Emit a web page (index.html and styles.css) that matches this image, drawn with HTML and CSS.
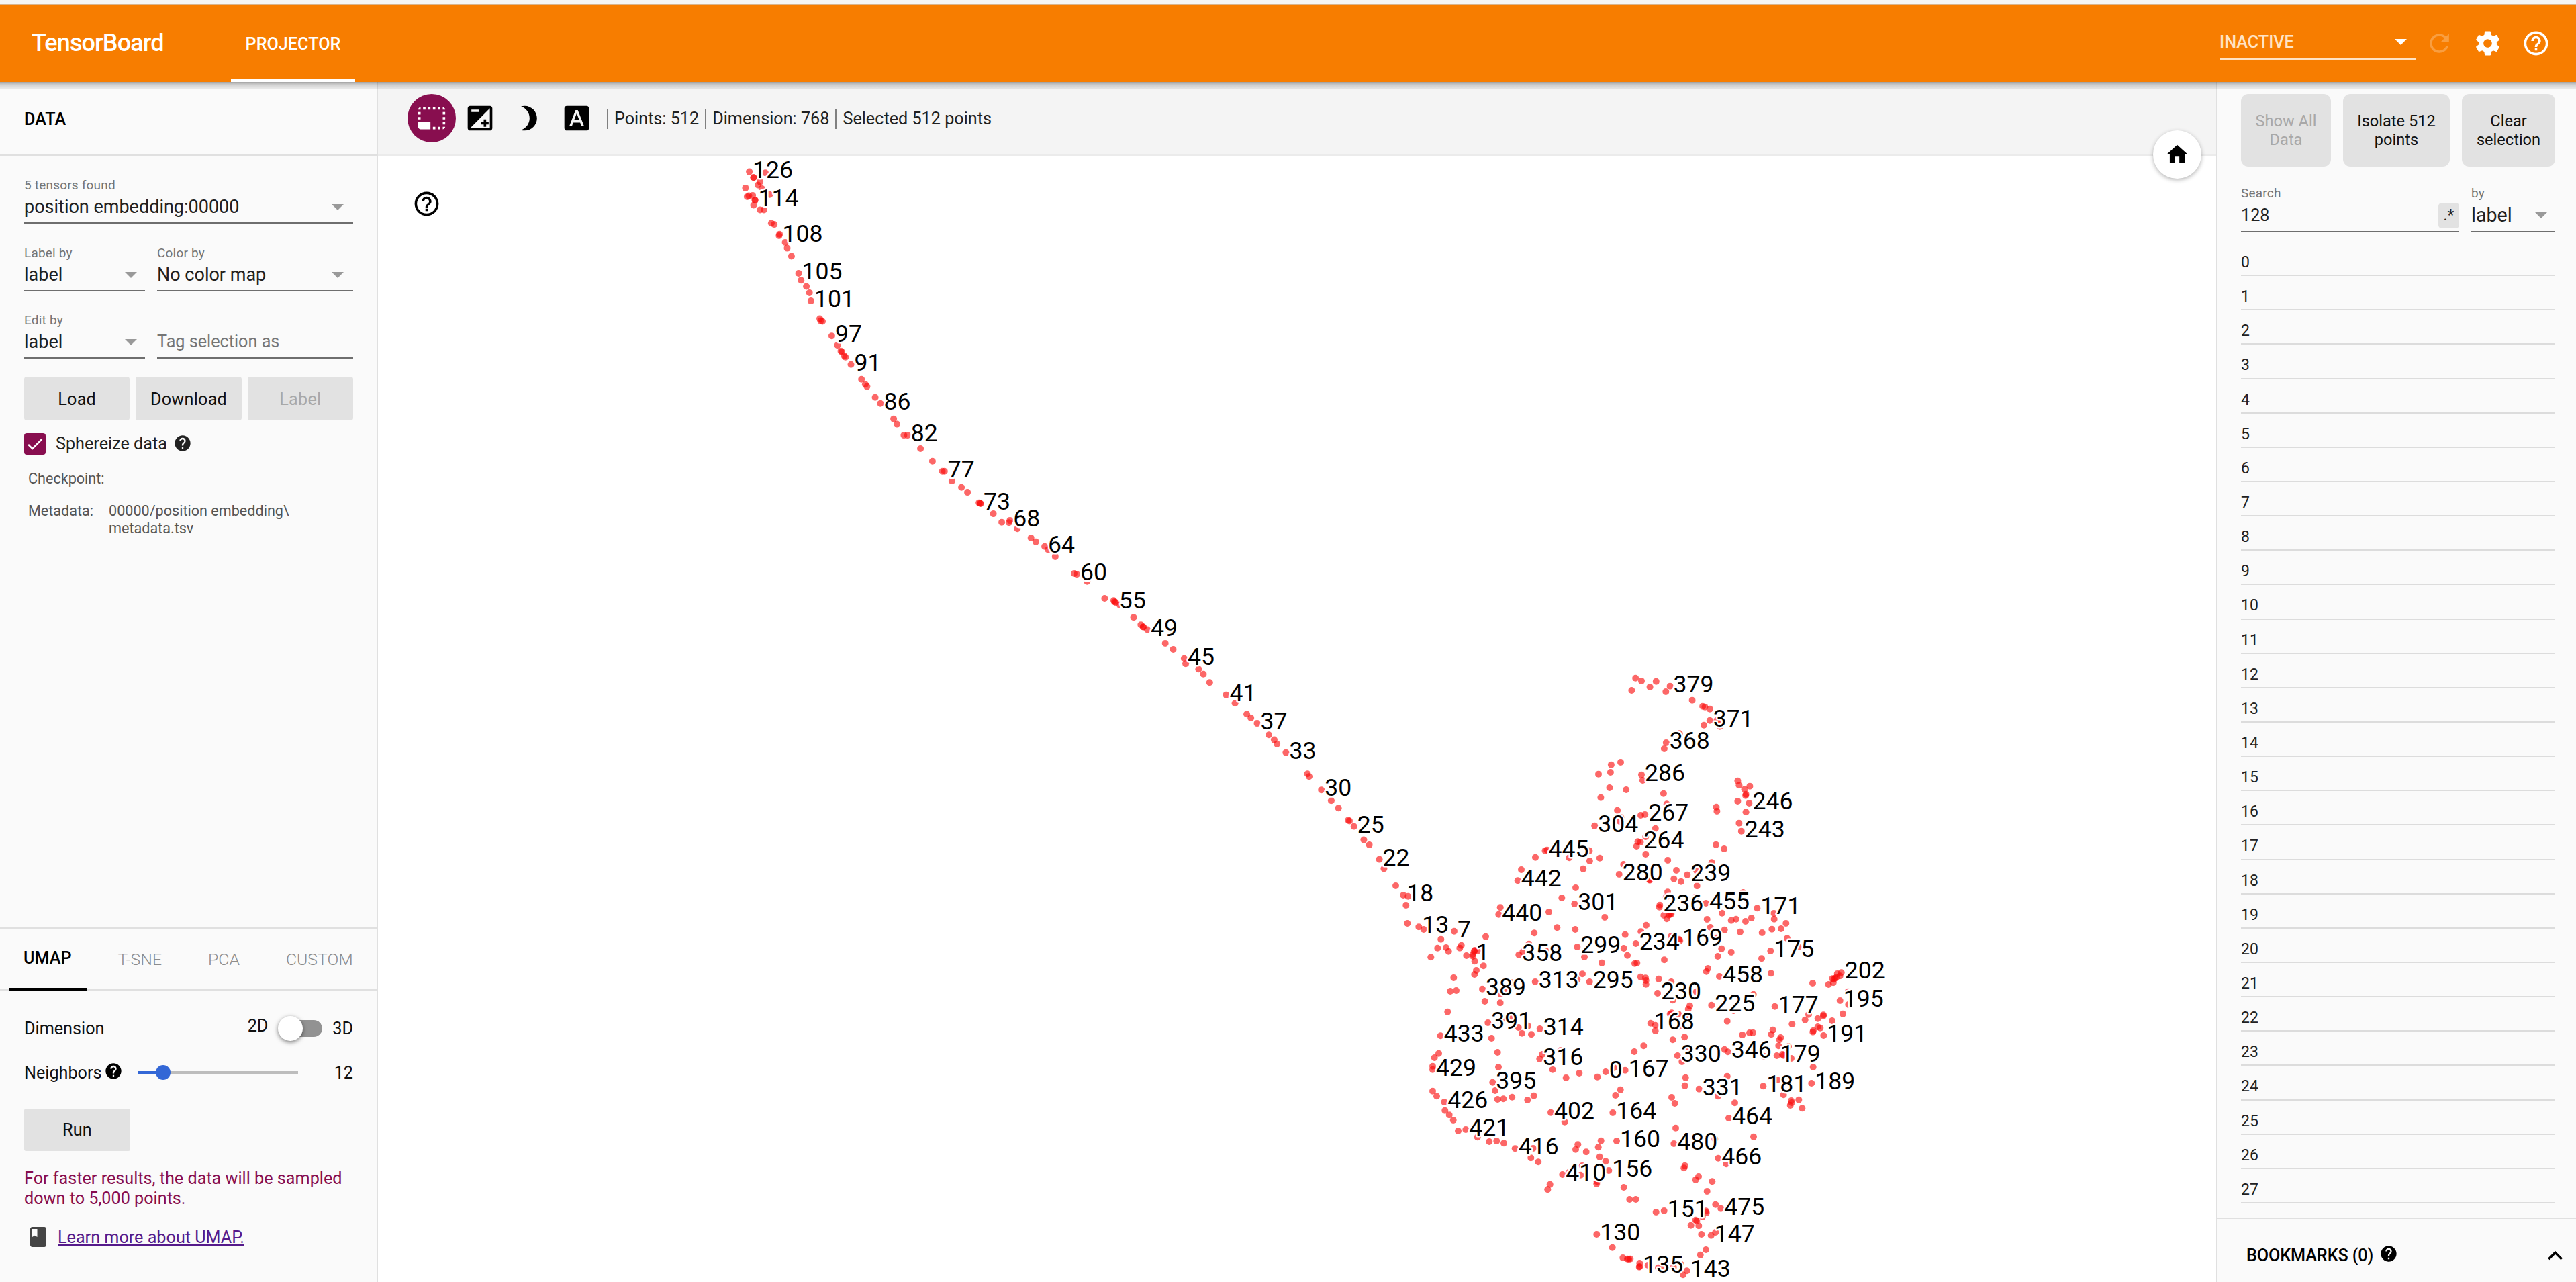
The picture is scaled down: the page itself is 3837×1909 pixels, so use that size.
FILE: index.html
```html
<!DOCTYPE html>
<html lang="en">
<head>
<meta charset="utf-8">
<title>TensorBoard</title>
<link rel="stylesheet" href="styles.css">
</head>
<body>
<svg class="defs" aria-hidden="true">
  <symbol id="i-size" viewBox="0 0 24 24"><path d="M23 15h-2v2h2v-2zm0-4h-2v2h2v-2zm0 8h-2v2c1 0 2-1 2-2zM15 3h-2v2h2V3zm8 4h-2v2h2V7zm-2-4v2h2c0-1-1-2-2-2zM3 21h8v-6H1v4c0 1.1.9 2 2 2zM3 7H1v2h2V7zm12 12h-2v2h2v-2zm4-16h-2v2h2V3zm0 16h-2v2h2v-2zM3 3C2 3 1 4 1 5h2V3zm0 8H1v2h2v-2zm8-8H9v2h2V3zM7 3H5v2h2V3z"/></symbol>
  <symbol id="i-exposure" viewBox="0 0 24 24"><path d="M15 17v2h2v-2h2v-2h-2v-2h-2v2h-2v2h2zm5-15H4c-1.1 0-2 .9-2 2v16c0 1.1.9 2 2 2h16c1.1 0 2-.9 2-2V4c0-1.1-.9-2-2-2zM5 5h6v2H5V5zm15 15H4L20 4v16z"/></symbol>
  <symbol id="i-moon" viewBox="0 0 24 24"><path d="M9 2c-1.05 0-2.05.16-3 .46 4.06 1.27 7 5.06 7 9.54 0 4.48-2.94 8.27-7 9.54.95.3 1.95.46 3 .46 5.52 0 10-4.48 10-10S14.52 2 9 2z"/></symbol>
  <symbol id="i-font" viewBox="0 0 24 24"><path d="M9.93 13.5h4.14L12 7.98zM20 2H4c-1.1 0-2 .9-2 2v16c0 1.1.9 2 2 2h16c1.1 0 2-.9 2-2V4c0-1.1-.9-2-2-2zm-4.05 16.5l-1.14-3H9.17l-1.12 3H5.96l5.11-13h1.86l5.11 13h-2.09z"/></symbol>
  <symbol id="i-help" viewBox="0 0 24 24"><path d="M12 2C6.48 2 2 6.48 2 12s4.48 10 10 10 10-4.48 10-10S17.52 2 12 2zm1 17h-2v-2h2v2zm2.07-7.75l-.9.92C13.45 12.9 13 13.5 13 15h-2v-.5c0-1.1.45-2.1 1.17-2.83l1.24-1.26c.37-.36.59-.86.59-1.41 0-1.1-.9-2-2-2s-2 .9-2 2H8c0-2.21 1.79-4 4-4s4 1.79 4 4c0 .88-.36 1.68-.93 2.25z"/></symbol>
  <symbol id="i-help-outline" viewBox="0 0 24 24"><path d="M11 18h2v-2h-2v2zm1-16C6.48 2 2 6.48 2 12s4.48 10 10 10 10-4.48 10-10S17.52 2 12 2zm0 18c-4.41 0-8-3.59-8-8s3.59-8 8-8 8 3.59 8 8-3.59 8-8 8zm0-14c-2.21 0-4 1.79-4 4h2c0-1.1.9-2 2-2s2 .9 2 2c0 2-3 1.75-3 5h2c0-2.25 3-2.5 3-5 0-2.21-1.79-4-4-4z"/></symbol>
  <symbol id="i-refresh" viewBox="0 0 24 24"><path d="M17.65 6.35C16.2 4.9 14.21 4 12 4c-4.42 0-7.99 3.58-7.99 8s3.57 8 7.99 8c3.73 0 6.84-2.55 7.73-6h-2.08c-.82 2.33-3.04 4-5.65 4-3.31 0-6-2.69-6-6s2.69-6 6-6c1.66 0 3.14.69 4.22 1.78L13 11h7V4l-2.35 2.35z"/></symbol>
  <symbol id="i-gear" viewBox="0 0 24 24"><path d="M19.43 12.98c.04-.32.07-.64.07-.98s-.03-.66-.07-.98l2.11-1.65c.19-.15.24-.42.12-.64l-2-3.46c-.12-.22-.39-.3-.61-.22l-2.49 1c-.52-.4-1.08-.73-1.69-.98l-.38-2.65C14.46 2.18 14.25 2 14 2h-4c-.25 0-.46.18-.49.42l-.38 2.65c-.61.25-1.17.59-1.69.98l-2.49-1c-.23-.09-.49 0-.61.22l-2 3.46c-.13.22-.07.49.12.64l2.11 1.65c-.04.32-.07.65-.07.98s.03.66.07.98l-2.11 1.65c-.19.15-.24.42-.12.64l2 3.46c.12.22.39.3.61.22l2.49-1c.52.4 1.08.73 1.69.98l.38 2.65c.03.24.24.42.49.42h4c.25 0 .46-.18.49-.42l.38-2.65c.61-.25 1.17-.59 1.69-.98l2.49 1c.23.09.49 0 .61-.22l2-3.46c.12-.22.07-.49-.12-.64l-2.11-1.65zM12 15.5c-1.93 0-3.5-1.57-3.5-3.5s1.57-3.5 3.5-3.5 3.5 1.57 3.5 3.5-1.57 3.5-3.5 3.5z"/></symbol>
  <symbol id="i-home" viewBox="0 0 24 24"><path d="M10 20v-6h4v6h5v-8h3L12 3 2 12h3v8z"/></symbol>
  <symbol id="i-up" viewBox="0 0 24 24"><path d="M12 8l-6 6 1.41 1.41L12 10.83l4.59 4.58L18 14z"/></symbol>
  <symbol id="i-book" viewBox="0 0 24 24"><path d="M18 2H6c-1.1 0-2 .9-2 2v16c0 1.1.9 2 2 2h12c1.1 0 2-.9 2-2V4c0-1.1-.9-2-2-2zM6 4h5v8l-2.5-1.5L6 12V4z"/></symbol>
  <symbol id="i-check" viewBox="0 0 24 24"><path d="M9 16.2L4.8 12l-1.4 1.4L9 19 21 7l-1.4-1.4z"/></symbol>
  <symbol id="i-drop" viewBox="0 0 10 5"><path d="M0 0l5 5 5-5z"/></symbol>
</svg>

<div class="app">
  <header class="topbar">
    <h1 class="brand">TensorBoard</h1>
    <nav class="nav"><a class="nav-tab">PROJECTOR</a></nav>
    <div class="plugin-select"><span>INACTIVE</span><svg class="drop"><use href="#i-drop"/></svg></div>
    <svg class="top-icon faded"><use href="#i-refresh"/></svg>
    <svg class="top-icon"><use href="#i-gear"/></svg>
    <svg class="top-icon"><use href="#i-help-outline"/></svg>
  </header>

  <div class="content">
    <aside class="left">
      <div class="panel-title">DATA</div>
      <div class="data-body">
        <div class="field"><label>5 tensors found</label><div class="value"><span>position embedding:00000</span><svg class="drop"><use href="#i-drop"/></svg></div></div>
        <div class="pair">
          <div class="field"><label>Label by</label><div class="value narrow"><span>label</span><svg class="drop"><use href="#i-drop"/></svg></div></div>
          <div class="field"><label>Color by</label><div class="value"><span>No color map</span><svg class="drop"><use href="#i-drop"/></svg></div></div>
        </div>
        <div class="pair">
          <div class="field"><label>Edit by</label><div class="value narrow"><span>label</span><svg class="drop"><use href="#i-drop"/></svg></div></div>
          <div class="field"><label>&nbsp;</label><div class="value hint"><span>Tag selection as</span></div></div>
        </div>
        <div class="buttons"><button>Load</button><button>Download</button><button disabled>Label</button></div>
        <div class="check-row"><span class="box"><svg><use href="#i-check"/></svg></span><span>Sphereize data</span><svg class="help"><use href="#i-help"/></svg></div>
        <dl class="meta">
          <dt>Checkpoint:</dt><dd></dd>
          <dt>Metadata:</dt><dd>00000/position embedding\<br>metadata.tsv</dd>
        </dl>
      </div>
      <div class="projections">
        <div class="tabs"><span class="tab active">UMAP</span><span class="tab">T-SNE</span><span class="tab">PCA</span><span class="tab">CUSTOM</span></div>
        <div class="umap">
          <div class="row"><span>Dimension</span><span class="two">2D</span><span class="toggle"><i></i></span><span>3D</span></div>
          <div class="row second"><span>Neighbors</span><svg class="help"><use href="#i-help"/></svg><span class="slider"><i class="fill"></i><i class="knob"></i></span><span class="count">12</span></div>
          <button class="run">Run</button>
          <p class="notice">For faster results, the data will be sampled<br>down to 5,000 points.</p>
          <div class="learn"><svg><use href="#i-book"/></svg><a>Learn more about UMAP.</a></div>
        </div>
      </div>
    </aside>

    <main class="stage">
      <div class="toolbar">
        <span class="tool on"><svg><use href="#i-size"/></svg></span>
        <span class="tool"><svg><use href="#i-exposure"/></svg></span>
        <span class="tool"><svg><use href="#i-moon"/></svg></span>
        <span class="tool"><svg><use href="#i-font"/></svg></span>
        <div class="stats"><span>Points: 512</span><span>Dimension: 768</span><span>Selected 512 points</span></div>
      </div>
      <svg class="scatter" id="scatter" viewBox="563 232 2738 1677"><g id="dots"></g><g id="labels"></g></svg>
      <svg class="stage-help"><use href="#i-help-outline"/></svg>
      <span class="home"><svg><use href="#i-home"/></svg></span>
    </main>

    <aside class="right">
      <div class="actions"><button class="a1" disabled>Show All<br>Data</button><button class="a2">Isolate 512<br>points</button><button class="a3">Clear<br>selection</button></div>
      <div class="search">
        <div class="field query"><label>Search</label><div class="value"><span>128</span><span class="regex">.*</span></div></div>
        <div class="field by"><label>by</label><div class="value"><span>label</span><svg class="drop"><use href="#i-drop"/></svg></div></div>
      </div>
      <ul class="matches" id="matches"></ul>
      <div class="bookmarks"><span>BOOKMARKS (0)</span><svg class="help"><use href="#i-help"/></svg><svg class="up"><use href="#i-up"/></svg></div>
    </aside>
  </div>
</div>
<script src="app.js"></script>
</body>
</html>
```
FILE: styles.css
```css
* { box-sizing: border-box; }
body { margin: 0; font-family: Roboto, "Liberation Sans", sans-serif; font-size: 25.2px; color: #212121; background: #fff; }
svg { display: block; fill: currentColor; flex: none; }
button { font: inherit; color: #111; border: 0; background: #e2e2e2; padding: 0; letter-spacing: .25px; }
button:disabled { color: #a8a8a8; }
.defs { position: absolute; width: 0; height: 0; }
.app { width: 3837px; height: 1909px; display: flex; flex-direction: column; overflow: hidden; }

.topbar { height: 122px; border-top: 6px solid #f5f5f5; background: #f77d00; color: #fff; display: flex; align-items: stretch; padding: 0 38px 0 47px; flex: none; box-shadow: inset 0 1px #d9b48c; }
.brand { margin: 0; width: 297px; font-size: 36px; font-weight: 500; letter-spacing: -.9px; line-height: 117px; }
.nav { flex: 1; display: flex; }
.nav-tab { width: 185px; text-align: center; font-weight: 500; line-height: 120px; border-bottom: 4px solid #fff; height: 116px; }
.plugin-select { width: 292px; height: 83px; margin-right: 14px; border-bottom: 3px solid #ffe3c4; display: flex; align-items: center; justify-content: space-between; padding: 33px 13px 0 0; color: #ffe3c4; font-weight: 500; }
.plugin-select .drop { color: #fff; width: 18px; height: 9px; }
.top-icon { width: 43px; height: 43px; margin-top: 37px; margin-left: 29px; }
.plugin-select + .top-icon { margin-left: 0; }
.faded { opacity: .25; }
.drop { width: 18px; height: 9px; color: #999; }

.content { flex: 1; display: flex; min-height: 0; position: relative; }
.content::before { content: ""; position: absolute; z-index: 2; left: 0; right: 0; top: 0; height: 11px; background: linear-gradient(rgba(0,0,0,.34), rgba(0,0,0,.16) 40%, rgba(0,0,0,.05)); }

.left { width: 563px; background: #fafafa; border-right: 2px solid #e0e0e0; display: flex; flex-direction: column; }
.panel-title { height: 110px; border-bottom: 2px solid #e0e0e0; padding: 3px 0 0 36px; line-height: 106px; font-weight: 500; color: #000; }
.data-body { padding: 32px 35px 0 36px; flex: 1; }
.field { flex: 1; border-bottom: 2px solid #6e6e6e; height: 69px; }
.field label { display: block; font-size: 19px; line-height: 23px; color: #757575; letter-spacing: .2px; }
.value { height: 44px; padding: 0 14px 2px 0; display: flex; align-items: center; justify-content: space-between; font-size: 27px; line-height: 40px; }
.value.narrow { padding-right: 12px; }
.value.hint { font-size: 25.2px; color: #757575; }
.pair { display: flex; gap: 18px; margin-top: 32px; }
.pair + .pair { margin-top: 31px; }
.pair .field:first-child { flex: 0 0 180px; }
.buttons { display: flex; gap: 9px; margin-top: 27px; }
.buttons button { flex: 1; height: 65px; border-radius: 4px; padding-top: 1px; }
.check-row { display: flex; align-items: center; height: 33px; margin-top: 18px; }
.box { width: 32px; height: 32px; background: #880e4f; border-radius: 4px; color: #fff; margin-right: 15px; }
.box svg { width: 30px; height: 30px; margin: 1px; }
.help { width: 28px; height: 28px; margin-left: 9px; }
.check-row .help { margin-top: -2px; }
.meta { display: grid; grid-template-columns: 120px 1fr; row-gap: 22px; margin: 23px 0 0 6px; font-size: 21.6px; line-height: 26px; color: #555; }
.meta dt, .meta dd { margin: 0; white-space: nowrap; }

.projections { border-top: 2px solid #e0e0e0; height: 528px; flex: none; }
.tabs { height: 92px; border-bottom: 2px solid #e0e0e0; display: flex; gap: 25px; padding-left: 13px; }
.tab { padding: 0 22px; line-height: 92px; color: #8c8c8c; font-weight: 300; font-size: 24.8px; }
.tab.active { color: #000; font-weight: 500; font-size: 25.2px; line-height: 88px; height: 92px; border-bottom: 4px solid #000; }
.umap { padding: 36px 35px 0 36px; color: #111; }
.row { display: flex; align-items: center; height: 40px; }
.row.second { margin-top: 26px; }
.two { margin-left: auto; position: relative; top: -4px; }
.toggle { width: 61px; height: 25px; border-radius: 13px; background: #929292; margin: 0 15px 0 20px; position: relative; }
.toggle i { position: absolute; left: -5px; top: -6px; width: 37px; height: 37px; border-radius: 50%; background: #fff; box-shadow: 0 2px 6px rgba(0,0,0,.5); }
.row .help { margin-left: 3px; margin-top: -5px; color: #000; }
.slider { width: 238px; height: 4px; background: #bdbdbd; position: relative; margin-left: 23px; }
.fill { position: absolute; left: 0; top: 0; width: 30px; height: 4px; background: #3367d6; }
.knob { position: absolute; left: 26px; top: -9px; width: 22px; height: 22px; border-radius: 50%; background: #3367d6; }
.count { margin-left: auto; }
.run { display: block; width: 158px; height: 63px; border-radius: 3px; margin-top: 34px; }
.notice { margin: 26px 0 0; line-height: 29.6px; color: #880e4f; white-space: nowrap; }
.learn { display: flex; align-items: center; height: 30px; margin-top: 28px; gap: 11px; padding-left: 3px; }
.learn svg { width: 36px; height: 36px; color: #444; }
.learn a { color: #551a8b; text-decoration: underline; }

.stage { flex: 1; position: relative; display: flex; flex-direction: column; min-width: 0; }
.toolbar { height: 110px; background: #f4f4f4; border-bottom: 2px solid #ebebeb; display: flex; align-items: center; padding-left: 44px; flex: none; }
.tool { width: 72px; height: 72px; border-radius: 50%; display: flex; align-items: center; justify-content: center; color: #000; }
.tool svg { width: 44px; height: 44px; }
.tool.on { background: #880e4f; color: #fff; }
.stats { display: flex; margin: 2px 0 0 9px; }
.stats span { border-left: 2px solid #808080; padding: 0 9px; line-height: 30px; white-space: nowrap; }
.scatter { width: 2738px; height: 1677px; }
.scatter circle { fill: #fa0a0a; fill-opacity: .62; }
.scatter text { font-size: 35.6px; fill: #000; stroke: #fff; stroke-width: 5px; stroke-linejoin: round; paint-order: stroke; }
.stage-help { position: absolute; left: 51px; top: 160px; width: 43px; height: 43px; color: #000; }
.home { position: absolute; left: 2644px; top: 72px; width: 72px; height: 72px; border-radius: 50%; background: #fff; color: #000; display: flex; align-items: center; justify-content: center; box-shadow: 0 2px 6px rgba(0,0,0,.3); }
.home svg { width: 38px; height: 38px; }

.right { width: 536px; background: #fafafa; border-left: 1px solid #e0e0e0; display: flex; flex-direction: column; }
.actions { display: flex; gap: 18px; margin: 18px 31px 0 36px; height: 108px; }
.actions button { border-radius: 11px; font-size: 23.6px; line-height: 27.3px; letter-spacing: 0; padding-top: 1px; }
.a1 { width: 134px; } .a2 { width: 159px; } .a3 { width: 139px; }
.search { display: flex; gap: 18px; margin: 28px 31px 0 36px; }
.search .field { height: 70px; }
.query { flex: 0 0 325px; }
.query .value { font-size: 25.2px; padding: 0; }
.regex { width: 31px; height: 38px; border-radius: 5px; background: #e2e2e2; text-align: center; line-height: 38px; font-size: 23px; }
.by .value { font-size: 28.6px; padding-right: 12px; }
.matches { list-style: none; margin: 14px 31px 0 36px; padding: 0; flex: 1; font-size: 23px; }
.matches li { height: 51.15px; border-bottom: 2px solid #dcdcdc; padding-top: 9px; line-height: 44px; }
.bookmarks { height: 96px; border-top: 2px solid #e0e0e0; display: flex; align-items: center; padding: 15px 9px 0 44px; color: #000; }
.bookmarks .help { margin-top: -5px; }
.bookmarks span { font-weight: 500; letter-spacing: -.1px; }
.up { width: 44px; height: 44px; margin-left: auto; }
```
FILE: app.js
```js
// Projected points. Each tile has an origin and a unit size;
// every entry is "x,y" or "x,y,label" in tile units.
const tiles = [
  { x: 1060, y: 230, sx: 0.35714, sy: 0.43367, points: "157,59,126 175,79 175,79 224,63 202,94 193,105 209,117 141,115 148,145 155,142 171,141 181,157,114 181,157 242,138 175,174 202,190 218,190 249,236 261,240 283,274 281,279,108 307,302 315,322 333,349 363,408,105 373,432 395,453 408,475 414,503,101 451,564 455,571 462,573 501,623,97 525,655 539,675 543,678 553,691 558,696 581,721,91 625,772 641,789 648,797 682,834 704,855,86 759,908 773,926 802,964 817,964,82 871,1010 921,1053 962,1088 971,1088,77 1002,1121 1042,1143 1067,1160 1115,1196 1120,1198,73 1122,1199 1175,1234 1210,1263 1240,1264 1244,1257,68 1275,1285 1332,1317 1352,1330 1389,1346,64 1403,1357 1433,1381" },
  { x: 1500, y: 780, sx: 0.35714, sy: 0.40816, points: "280,181 291,184,60 334,210 407,272 445,280 448,285 453,287,55 470,296 528,341 558,368 568,376 568,376 585,386,49 660,436 693,458 739,492,45 745,510 799,530 819,548 845,579 914,624,41 951,655 1000,694 1017,708 1043,728,37 1092,770 1114,788 1126,803 1163,835,33 1253,912 1260,922 1311,971,30 1352,1010 1382,1037 1423,1081 1428,1084 1447,1104,25 1488,1153 1511,1171 1553,1224,22 1572,1258" },
  { x: 2080, y: 980, sx: 0.48469, sy: 0.33333, points: "735,89 753,102 723,144 779,129 798,104 828,150 841,125,379 909,188 941,215 948,218 963,227 963,278,371 945,299 985,278 992,284 994,305 870,337 829,378,368 823,405 689,465 660,476 658,510 621,518 753,521,286 757,546 655,579 706,588 628,623 821,605 831,652 679,680 751,702 764,699,267 690,712 687,730 609,749,304 796,761 766,798 742,820 750,822,264 738,840 766,876 457,860,445 463,857 480,855 593,860 531,892 427,890 594,906 625,893 982,833 1007,852 834,903 698,921 969,913 1049,548 1053,568 1086,572 1070,586 1074,608 1073,614 1049,639 1084,648,246 1074,688 983,665 985,684 1053,737 1060,773,243 574,941" },
  { x: 2080, y: 1290, sx: 0.33333, sy: 0.33333, points: "558,15 542,64,442 995,36,280 801,96 739,141 796,168,301 -3,87 31,129,18 52,134 43,174 49,255 100,271,13 122,282 258,290,7 199,326 184,365 222,363 233,380 290,353 283,365 399,314 154,406 313,399 350,375 347,380 362,377 341,394,1 342,402 350,424 389,445 357,465 349,483 464,184 457,215,440 681,204 931,228 718,274 616,298 799,282 592,347 565,382 547,395,358 666,375 808,360,299 840,405 918,431 1022,305 1016,366 1032,398 1065,434 1075,432 1070,345,234 620,516,313 808,506 831,481 863,516,295 256,498 241,558 267,555 384,548,389 395,603 464,610 466,570 488,553 514,520 229,650 409,699,391 477,680 513,675 545,720 561,746 603,751 588,713 641,726,314 197,757,433 425,768 452,831 189,836 170,855 162,893 162,908,429 456,897 652,840 640,860,316 733,823 698,908" },
  { x: 2440, y: 1290, sx: 0.33333, sy: 0.33333, points: "171,18 160,56 192,68 220,38,239 262,20 263,88 52,62 132,115 125,138 97,173,236 95,182 255,138 303,165,455 469,117 532,187,171 608,236 607,210 375,209 308,237 416,242 438,236 480,246 506,231 115,219 148,213 143,214 138,218 128,235 36,263 13,292 386,284 323,273 456,293 554,297 598,281 639,279 661,255 666,322 716,360 592,378,175 148,312 183,326,169 187,332 350,320 373,368 356,402 416,384 552,412 117,418 312,456 305,470 363,492,458 594,478 11,494 33,499 35,510 35,527 92,503 87,567,230 148,516 260,560 155,598 231,623 224,638 515,572 328,620,225 427,645 398,692 611,626,177 780,522 851,528 872,520 868,502 875,505 880,500 887,495 890,480 902,490 908,475,202 902,600,195 938,560 940,618 915,659 762,662 746,686 688,705 803,680 828,664 828,668 867,690 829,756,191 803,717 814,722 783,734 781,740 150,655 143,660 180,660 185,715 222,670 56,701,168 77,710 77,735 208,763 155,775 25,802 -17,828 466,753 498,744 513,743 602,731 595,751 637,765 632,775 628,802 672,805 386,818 401,829,346 176,846,330 215,812 196,873 562,848 620,846,179 645,840 650,845 684,858 782,897 51,60" },
  { x: 2080, y: 1590, sx: 0.33333, sy: 0.33333, points: "817,24 758,45 898,41 935,18,0 972,0 1022,11,167 430,65,395 441,102 452,141 478,139 517,131 586,144 614,125 162,104 180,127 214,153,426 217,191 236,211 254,234 276,282 310,276,421 362,310 415,330 448,327 480,337 530,361,416 611,360 601,403 634,421 690,200,402 752,242 1001,98 979,123 967,201,164 914,326 902,355 984,327,160 811,343 801,365 848,376 908,398 935,418 949,459,156 830,438 742,477,410 770,468 823,479 896,508 895,518 686,521 676,544 1016,534 1042,588 1070,588 895,744,130 965,803 1012,849 1032,854 1038,855 1045,854" },
  { x: 2440, y: 1590, sx: 0.33333, sy: 0.33333, points: "7,873 7,888,135 5,890 44,882 90,893 105,893 158,890 192,878 218,907,143 201,925 278,836 303,813 283,744 326,749,147 346,735 236,704 271,706 257,680 262,684 287,665 303,640 305,648 346,611 370,629,475 80,645 116,639,151 308,552 331,508 270,486 257,500 209,437 205,448 358,404,466 394,430 343,318 160,339,480 168,269 150,132 164,159 212,44 209,80 272,95,331 398,38 357,127 432,157 405,225,464 516,308 559,82,181 622,54 650,121 684,147 686,156 680,168 718,143 733,181 775,69,189" }
];

const NS = "http://www.w3.org/2000/svg";
const dots = document.getElementById("dots");
const labels = document.getElementById("labels");

for (const tile of tiles) {
  for (const entry of tile.points.split(" ")) {
    const [px, py, label] = entry.split(",");
    const x = tile.x + px * tile.sx;
    const y = tile.y + py * tile.sy;
    const dot = document.createElementNS(NS, "circle");
    dot.setAttribute("cx", x.toFixed(1));
    dot.setAttribute("cy", y.toFixed(1));
    dot.setAttribute("r", 5);
    dots.append(dot);
    if (label !== undefined) {
      const text = document.createElementNS(NS, "text");
      text.setAttribute("x", (x + 5).toFixed(1));
      text.setAttribute("y", (y + 9).toFixed(1));
      text.textContent = label;
      labels.append(text);
    }
  }
}

const matches = document.getElementById("matches");
for (let i = 0; i < 28; i++) {
  const row = document.createElement("li");
  row.textContent = i;
  matches.append(row);
}
```
